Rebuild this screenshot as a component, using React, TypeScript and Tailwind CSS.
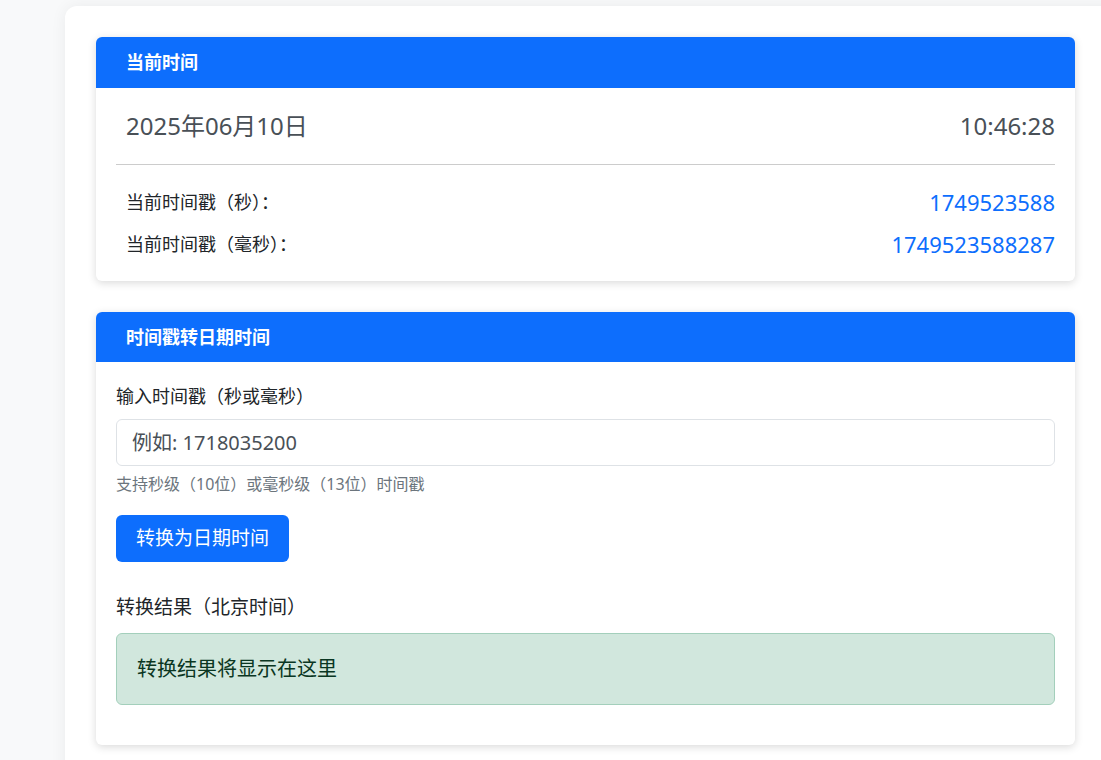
import React from "react";

export default function App() {
  return (
    <div
      className="h-[760px] w-full overflow-hidden bg-[#f8f9fa] pl-[65px] pt-[6px] text-[#212529]"
      style={{ fontFamily: '"Noto Sans", "Noto Sans CJK SC", sans-serif' }}
    >
      <div className="w-[1070px] rounded-xl bg-white px-[31px] pt-[31px] pb-10 shadow-[0_0_16px_rgba(0,0,0,0.06)]">
        <div className="w-[979px] overflow-hidden rounded-md bg-white shadow-[0_2px_8px_rgba(0,0,0,0.15)]">
          <div className="flex h-[51px] items-center bg-[#0d6efd] px-[30px] text-[18px] font-bold text-white">
            当前时间
          </div>
          <div className="px-5 pb-4">
            <div className="flex h-[76px] items-center justify-between pl-[10px] text-[24px] text-[#495057]">
              <span>2025年06月10日</span>
              <span>10:46:28</span>
            </div>
            <div className="mb-4 border-t border-[#ccc]" />
            <div className="flex h-[42px] items-center justify-between pl-[10px] text-[18px]">
              <span>当前时间戳（秒）：</span>
              <span className="text-[22px] text-[#0d6efd]">1749523588</span>
            </div>
            <div className="flex h-[42px] items-center justify-between pl-[10px] text-[18px]">
              <span>当前时间戳（毫秒）：</span>
              <span className="text-[22px] text-[#0d6efd]">1749523588287</span>
            </div>
          </div>
        </div>

        <div className="mt-[31px] w-[979px] overflow-hidden rounded-md bg-white shadow-[0_2px_8px_rgba(0,0,0,0.15)]">
          <div className="flex h-[50px] items-center bg-[#0d6efd] px-[30px] text-[18px] font-bold text-white">
            时间戳转日期时间
          </div>
          <div className="px-5 pt-[21px] pb-10">
            <div className="mb-[9px] text-[18px]">输入时间戳（秒或毫秒）</div>
            <div className="flex h-[47px] items-center rounded-md border border-[#dee2e6] px-[15px] text-[20px] text-[#495057]">
              例如: 1718035200
            </div>
            <div className="mt-[6px] text-[16px] text-[#6c757d]">支持秒级（10位）或毫秒级（13位）时间戳</div>
            <button className="mt-[19px] h-[47px] rounded-md bg-[#0d6efd] px-[20px] text-[19px] text-white">
              转换为日期时间
            </button>
            <div className="mt-[31px] mb-[11px] text-[19px]">转换结果（北京时间）</div>
            <div className="flex h-[72px] items-center rounded-md border border-[#a3cfbb] bg-[#d1e7dd] px-5 text-[20px] text-[#0a3622]">
              转换结果将显示在这里
            </div>
          </div>
        </div>
      </div>
    </div>
  );
}
